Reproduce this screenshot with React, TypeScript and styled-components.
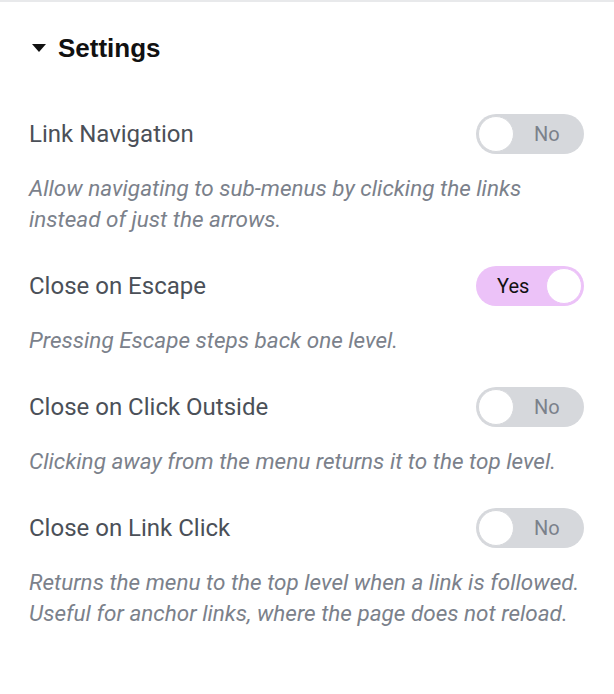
import styled, { createGlobalStyle } from 'styled-components';

const GlobalStyle = createGlobalStyle`
  body {
    margin: 0;
    background: #ffffff;
    font-family: Roboto, "Liberation Sans", sans-serif;
  }
`;

type setting = {
  label: string;
  description: string[];
  on: boolean;
};

const settings: setting[] = [
  {
    label: 'Link Navigation',
    description: ['Allow navigating to sub-menus by clicking the links', 'instead of just the arrows.'],
    on: false,
  },
  {
    label: 'Close on Escape',
    description: ['Pressing Escape steps back one level.'],
    on: true,
  },
  {
    label: 'Close on Click Outside',
    description: ['Clicking away from the menu returns it to the top level.'],
    on: false,
  },
  {
    label: 'Close on Link Click',
    description: [
      'Returns the menu to the top level when a link is followed.',
      'Useful for anchor links, where the page does not reload.',
    ],
    on: false,
  },
];

const Toggle = (props: { on: boolean }) => {
  const { on } = props;
  return (
    <Switch on={on}>
      <span className='switch-text'>{on ? 'Yes' : 'No'}</span>
      <span className='knob'></span>
    </Switch>
  );
};

const App = () => {
  return (
    <>
      <GlobalStyle />
      <Panel>
        <Header>
          <svg width='14' height='8' viewBox='0 0 14 8'>
            <path d='M0 0 L14 0 L7 8 Z' fill='#111' />
          </svg>
          <span className='title'>Settings</span>
        </Header>
        <List>
          {settings.map((s) => (
            <Item key={s.label}>
              <Row>
                <div className='label'>{s.label}</div>
                <Toggle on={s.on} />
              </Row>
              <Description>
                {s.description.map((line) => (
                  <div key={line}>{line}</div>
                ))}
              </Description>
            </Item>
          ))}
        </List>
      </Panel>
    </>
  );
};

const Panel = styled.div`
  border-top: 2px solid #e8e9eb;
  padding: 0 30px 60px 29px;
  min-height: 692px;
  box-sizing: border-box;
`;

const Header = styled.div`
  display: flex;
  align-items: center;
  gap: 12px;
  height: 34px;
  margin-top: 29px;
  padding-left: 3px;

  .title {
    font-family: "Liberation Sans", Arial, sans-serif;
    font-size: 26px;
    font-weight: 700;
    color: #111111;
  }
`;

const List = styled.div`
  display: flex;
  flex-direction: column;
  gap: 31px;
  margin-top: 49px;
`;

const Item = styled.div`
  display: flex;
  flex-direction: column;
`;

const Row = styled.div`
  display: flex;
  align-items: center;
  justify-content: space-between;
  height: 40px;

  .label {
    font-size: 24px;
    color: #4b5058;
  }
`;

const Description = styled.div`
  margin-top: 19px;
  font-size: 22.5px;
  font-style: italic;
  line-height: 31px;
  color: #7b818b;
`;

const Switch = styled.div<{ on: boolean }>`
  position: relative;
  width: 108px;
  height: 40px;
  border-radius: 20px;
  box-sizing: border-box;
  background-color: ${(props) => (props.on ? '#ecc2f8' : '#d6d8dc')};
  display: flex;
  align-items: center;
  flex-shrink: 0;

  .switch-text {
    font-size: 20px;
    color: ${(props) => (props.on ? '#111111' : '#7b818b')};
    position: absolute;
    left: ${(props) => (props.on ? '21px' : '58px')};
  }

  .knob {
    position: absolute;
    top: 2px;
    left: ${(props) => (props.on ? '70px' : '2px')};
    width: 36px;
    height: 36px;
    border-radius: 50%;
    background: #ffffff;
    box-sizing: border-box;
    border: 1px solid ${(props) => (props.on ? '#ecc2f8' : '#d6d8dc')};
  }
`;

export default App;
